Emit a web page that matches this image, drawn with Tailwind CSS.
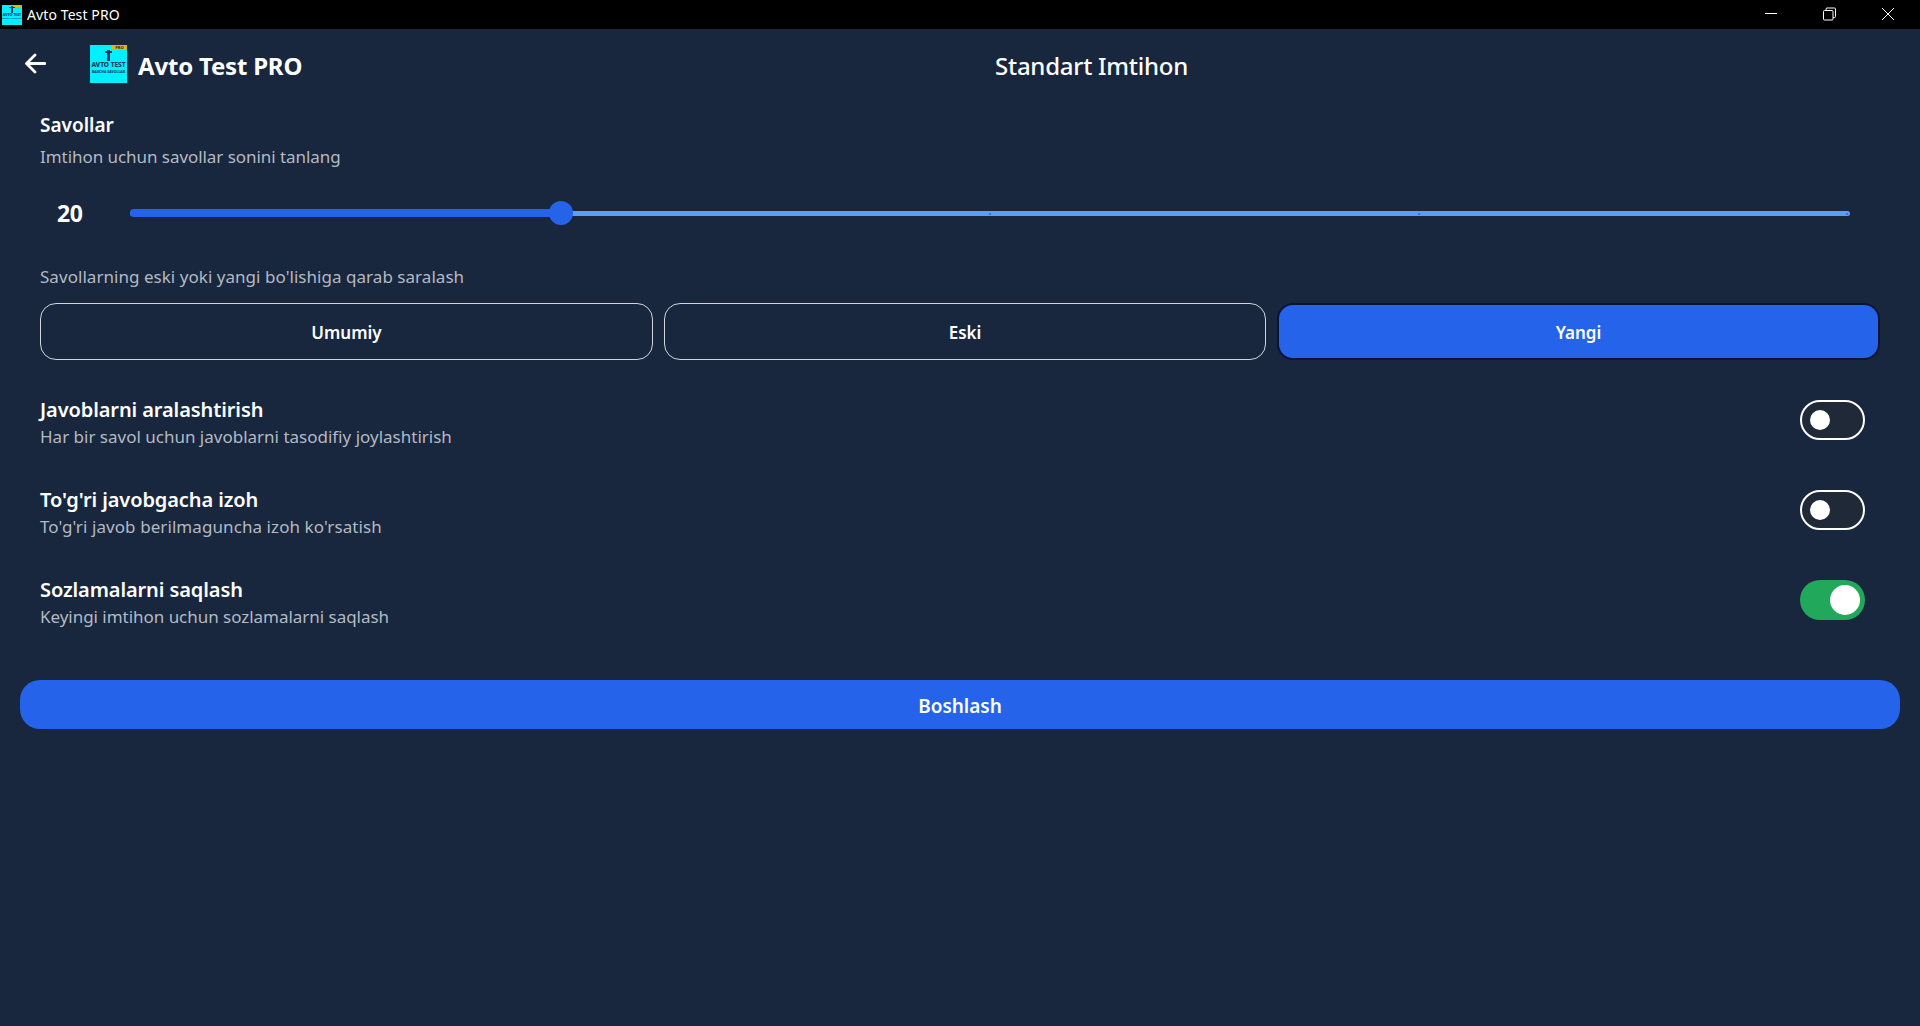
<!DOCTYPE html>
<html lang="en">
<head>
  <meta charset="UTF-8">
  <title>Avto Test PRO</title>
  <script src="https://cdn.jsdelivr.net/npm/@tailwindcss/browser@4"></script>
</head>
<body class="bg-[#18273e] text-white font-['Noto_Sans',sans-serif] h-[1026px] overflow-hidden">

  <!-- Window title bar -->
  <div class="h-[29px] bg-black flex items-center">
    <div class="relative ml-[2px] w-[20px] h-[20px] bg-[#00f0ff] overflow-hidden flex flex-col items-center">
      <div class="absolute right-[1px] top-0 w-[7px] h-[2px] bg-[#eab308]"></div>
      <div class="absolute left-[9px] top-[1px] w-[2px] h-[7px] bg-[#1e3a5f]"></div>
      <div class="absolute left-[7px] top-[2px] w-[6px] h-[1px] bg-[#1e3a5f]"></div>
      <div class="mt-[8px] text-[3.500px] leading-[4px] font-extrabold text-[#12305a] whitespace-nowrap">AVTO TEST</div>
      <div class="mt-[1px] text-[2px] leading-[2px] font-bold text-[#12305a] whitespace-nowrap">BARCHA SAVOLLAR</div>
    </div>
    <span class="ml-[5px] text-[14px] tracking-[0.1px]">Avto Test PRO</span>
    <div class="ml-auto flex items-center h-full pr-[13px]">
      <svg class="w-[58px] h-[29px]" viewBox="0 0 58 29" fill="none" stroke="#fff" stroke-width="1"><path d="M22 13.500h12"/></svg>
      <svg class="w-[58px] h-[29px]" viewBox="0 0 58 29" fill="none" stroke="#fff" stroke-width="1"><rect x="22.500" y="10.500" width="9.500" height="9.500" rx="1"/><path d="M25 10.500V9a1 1 0 0 1 1-1h7.500a1 1 0 0 1 1 1v7.500a1 1 0 0 1-1 1H32"/></svg>
      <svg class="w-[48px] h-[29px]" viewBox="0 0 48 29" fill="none" stroke="#fff" stroke-width="1"><path d="M23 8l12 12M35 8L23 20"/></svg>
    </div>
  </div>

  <!-- App header -->
  <header class="h-[74px] flex items-center px-[25px] pr-10">
    <svg class="w-[21px] h-[21px] -mt-[5px]" viewBox="0 0 21 21" fill="none" stroke="#fff" stroke-width="2.800" stroke-linecap="round" stroke-linejoin="round"><path d="M20 10.500H2M10 2l-8.500 8.500L10 19"/></svg>
    <div class="relative ml-[44px] w-[37px] h-[38px] -mt-[5px] bg-[#00f0ff] overflow-hidden flex flex-col items-center">
      <div class="absolute right-0 top-0 w-[15px] h-[5px] bg-[#eab308] text-[4px] leading-[5px] font-bold text-center text-[#1f2937]">PRO</div>
      <div class="absolute left-[17px] top-[5px] w-[3px] h-[11px] bg-[#1e3a5f]"></div>
      <div class="absolute left-[15px] top-[6px] w-[7px] h-[2px] bg-[#1e3a5f]"></div>
      <div class="mt-[16px] text-[6.500px] leading-[7px] font-extrabold text-[#12305a] whitespace-nowrap">AVTO TEST</div>
      <div class="mt-[2px] text-[3.500px] leading-[4px] font-bold text-[#12305a] whitespace-nowrap">BARCHA SAVOLLAR</div>
    </div>
    <h1 class="ml-[11px] w-[165px] text-[24px] font-bold tracking-[-0.2px] whitespace-nowrap -mt-[1px]">Avto Test PRO</h1>
    <h2 class="flex-1 text-center text-[24px] font-medium tracking-[-0.25px] -mt-[1px]">Standart Imtihon</h2>
  </header>

  <main class="px-5">
    <section class="px-5 pt-2">
      <h3 class="text-[19px] leading-7 font-semibold">Savollar</h3>
      <p class="mt-[4px] text-[17px] leading-7 text-[#b4b9c2] tracking-[-0.05px]">Imtihon uchun savollar sonini tanlang</p>

      <!-- Question count slider -->
      <div class="mt-[22px] h-10 flex items-center pl-[17px] pr-[30px]">
        <span class="w-[73px] text-[23px] font-bold tracking-[-0.3px]">20</span>
        <div class="relative flex-1 h-[5px] rounded-full bg-[#5a9ff5]">
          <div class="absolute left-0 top-[-1.500px] h-[8px] w-[431px] rounded-full bg-[#2563eb]"></div>
          <div class="absolute left-[419px] top-[-10px] w-6 h-6 rounded-full bg-[#2563eb]"></div>
          <div class="absolute left-[859px] top-[2px] w-[2px] h-[2px] rounded-full bg-[#2563eb]"></div>
          <div class="absolute left-[1288px] top-[2px] w-[2px] h-[2px] rounded-full bg-[#2563eb]"></div>
          <div class="absolute right-[2px] top-[2px] w-[2px] h-[2px] rounded-full bg-[#2563eb]"></div>
        </div>
      </div>

      <p class="mt-[30px] text-[17px] leading-7 text-[#b4b9c2] tracking-[0.04px]">Savollarning eski yoki yangi bo'lishiga qarab saralash</p>

      <!-- Old / new filter -->
      <div class="mt-3 grid grid-cols-[613px_602px_603px] gap-x-[11px] h-[57px]">
        <button class="border border-[#d1d5db] rounded-[16px] text-[17px] font-semibold pt-[2px]">Umumiy</button>
        <button class="border border-[#d1d5db] rounded-[16px] text-[17px] font-semibold pt-[2px]">Eski</button>
        <button class="border-2 border-[#0a1433] rounded-[16px] bg-[#2563eb] text-[17px] font-semibold pt-[2px]">Yangi</button>
      </div>

      <!-- Options -->
      <div class="mt-[15px]">
        <div class="h-[90px] flex justify-between items-start pt-[21px]">
          <div>
            <h3 class="text-[20px] leading-[27px] font-semibold tracking-[-0.1px]">Javoblarni aralashtirish</h3>
            <p class="text-[17px] leading-[28px] text-[#b4b9c2]">Har bir savol uchun javoblarni tasodifiy joylashtirish</p>
          </div>
          <div class="mt-[4px] mr-[15px] w-[65px] h-10 rounded-full border-2 border-white bg-[#1f2937] flex items-center pl-[8px]">
            <div class="w-5 h-5 rounded-full bg-white"></div>
          </div>
        </div>
        <div class="h-[90px] flex justify-between items-start pt-[21px]">
          <div>
            <h3 class="text-[20px] leading-[27px] font-semibold tracking-[-0.1px]">To'g'ri javobgacha izoh</h3>
            <p class="text-[17px] leading-[28px] text-[#b4b9c2] tracking-[0.08px]">To'g'ri javob berilmaguncha izoh ko'rsatish</p>
          </div>
          <div class="mt-[4px] mr-[15px] w-[65px] h-10 rounded-full border-2 border-white bg-[#1f2937] flex items-center pl-[8px]">
            <div class="w-5 h-5 rounded-full bg-white"></div>
          </div>
        </div>
        <div class="h-[90px] flex justify-between items-start pt-[21px]">
          <div>
            <h3 class="text-[20px] leading-[27px] font-semibold tracking-[-0.1px]">Sozlamalarni saqlash</h3>
            <p class="text-[17px] leading-[28px] text-[#b4b9c2] tracking-[-0.03px]">Keyingi imtihon uchun sozlamalarni saqlash</p>
          </div>
          <div class="mt-[4px] mr-[15px] w-[65px] h-10 rounded-full bg-[#22a85a] flex items-center justify-end pr-[5px]">
            <div class="w-[30px] h-[30px] rounded-full bg-white"></div>
          </div>
        </div>
      </div>
    </section>

    <button class="mt-[35px] w-full h-[49px] rounded-[20px] bg-[#2563eb] text-[19px] font-semibold pt-[4px]">Boshlash</button>
  </main>

</body>
</html>
